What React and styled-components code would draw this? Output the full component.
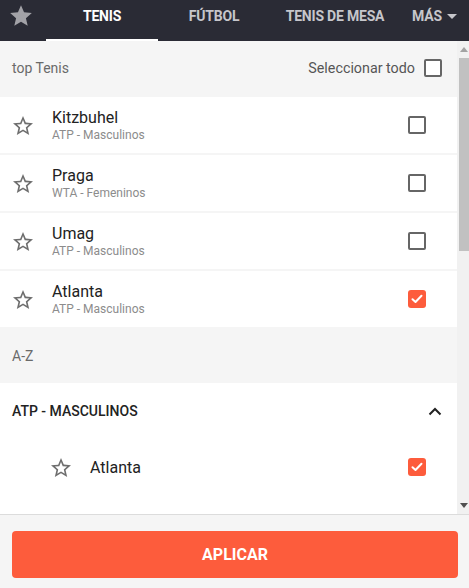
import React, { useState } from 'react'
import styled, { createGlobalStyle } from 'styled-components'

const GlobalStyle = createGlobalStyle`
  html, body {
    margin: 0;
    padding: 0;
    font-family: Roboto, "Liberation Sans", Arial, sans-serif;
    background: #fff;
  }
  * { box-sizing: border-box; }
`

const ACCENT = '#fd5c3c'

const topEvents = [
  { id: 'kitz', name: 'Kitzbuhel', league: 'ATP - Masculinos', checked: false },
  { id: 'praga', name: 'Praga', league: 'WTA - Femeninos', checked: false },
  { id: 'umag', name: 'Umag', league: 'ATP - Masculinos', checked: false },
  { id: 'atl', name: 'Atlanta', league: 'ATP - Masculinos', checked: true },
]

// only the part of the A-Z list that is in view
const groups = [
  { title: 'ATP - Masculinos', items: [
    { id: 'a1', name: 'Atlanta', checked: true },
  ] },
]

const StarOutline = ({ size = 24 }) => (
  <svg width={size} height={size} viewBox="0 0 24 24" fill="#6e6e6e">
    <path d="M22 9.24l-7.19-.62L12 2 9.19 8.63 2 9.24l5.46 4.73L5.82 21 12 17.27 18.18 21l-1.63-7.03L22 9.24zM12 15.4l-3.76 2.27 1-4.28-3.32-2.88 4.38-.38L12 6.1l1.71 4.04 4.38.38-3.32 2.88 1 4.28L12 15.4z" />
  </svg>
)

const Check = ({ checked, onClick }) => (
  <CheckBox $checked={checked} onClick={onClick}>
    {checked && (
      <svg width="12" height="10" viewBox="0 0 12 10">
        <path d="M1.5 5.2l3 2.8 6-6.2" fill="none" stroke="#fff" strokeWidth="2" strokeLinecap="round" strokeLinejoin="round" />
      </svg>
    )}
  </CheckBox>
)

export default function App() {
  const [top, setTop] = useState(topEvents)
  const [tab, setTab] = useState('tenis')

  const toggleTop = (id) => setTop((s) => s.map((e) => e.id === id ? { ...e, checked: !e.checked } : e))

  return (
    <Page>
      <GlobalStyle />
      <TopBar>
        <FavTab>
          <svg width="26" height="26" viewBox="0 0 24 24" fill="#a2a2a7">
            <path d="M12 17.27L18.18 21l-1.64-7.03L22 9.24l-7.19-.61L12 2 9.19 8.63 2 9.24l5.46 4.73L5.82 21z" />
          </svg>
        </FavTab>
        <Tab $w={112} $active={tab === 'tenis'} onClick={() => setTab('tenis')}>Tenis</Tab>
        <Tab $w={112} $active={tab === 'futbol'} onClick={() => setTab('futbol')}>Fútbol</Tab>
        <Tab $w={130} $active={tab === 'mesa'} onClick={() => setTab('mesa')}>Tenis de mesa</Tab>
        <Tab $grow>
          Más
          <Caret />
        </Tab>
      </TopBar>

      <ScrollArea>
        <List>
          <SectionHead>
            <span>top Tenis</span>
            <SelectAll>
              Seleccionar todo
              <Check checked={false} />
            </SelectAll>
          </SectionHead>

          {top.map((e) => (
            <EventRow key={e.id}>
              <StarSlot><StarOutline /></StarSlot>
              <EventText>
                <EventName>{e.name}</EventName>
                <EventLeague>{e.league}</EventLeague>
              </EventText>
              <Check checked={e.checked} onClick={() => toggleTop(e.id)} />
            </EventRow>
          ))}

          <SectionHead>
            <span>A-Z</span>
          </SectionHead>

          {groups.map((g) => (
            <Group key={g.title}>
              <GroupHead>
                <span>{g.title}</span>
                <svg width="14" height="9" viewBox="0 0 14 9">
                  <path d="M1.5 7.5L7 2l5.5 5.5" fill="none" stroke="#222" strokeWidth="2" />
                </svg>
              </GroupHead>
              {g.items.map((it) => (
                <SubRow key={it.id}>
                  <StarSlot $indent><StarOutline /></StarSlot>
                  <SubName>{it.name}</SubName>
                  <Check checked={it.checked} />
                </SubRow>
              ))}
            </Group>
          ))}
        </List>

        <ScrollBar>
          <ScrollBtn>
            <svg width="8" height="5" viewBox="0 0 8 5"><path d="M0 5L4 0L8 5Z" fill="#a3a3a3" /></svg>
          </ScrollBtn>
          <Thumb />
          <ScrollBtn>
            <svg width="8" height="5" viewBox="0 0 8 5"><path d="M0 0L4 5L8 0Z" fill="#505050" /></svg>
          </ScrollBtn>
        </ScrollBar>
      </ScrollArea>

      <Footer>
        <ApplyButton>Aplicar</ApplyButton>
      </Footer>
    </Page>
  )
}

const Page = styled.div`
  width: 469px;
  height: 588px;
  display: flex;
  flex-direction: column;
  overflow: hidden;
  background: #f5f5f5;
`

const TopBar = styled.nav`
  height: 41px;
  flex: none;
  display: flex;
  background: #2a2b35;
`

const FavTab = styled.div`
  width: 46px;
  padding: 3px 0 0 8px;
`

const Tab = styled.div`
  width: ${(p) => (p.$w ? `${p.$w}px` : 'auto')};
  flex: ${(p) => (p.$grow ? '1' : 'none')};
  height: 41px;
  padding-top: 7px;
  display: flex;
  justify-content: center;
  gap: 5px;
  line-height: 18px;
  font-size: 14px;
  font-weight: 700;
  text-transform: uppercase;
  letter-spacing: -0.2px;
  color: ${(p) => (p.$active ? '#fff' : '#c6c6cb')};
  border-bottom: 2px solid ${(p) => (p.$active ? '#fff' : 'transparent')};
  cursor: pointer;
`

const Caret = styled.span`
  margin-top: 7px;
  width: 0;
  height: 0;
  border-left: 5px solid transparent;
  border-right: 5px solid transparent;
  border-top: 5px solid #c6c6cb;
`

const ScrollArea = styled.div`
  height: 473px;
  flex: none;
  display: flex;
  background: #f5f5f5;
`

const List = styled.div`
  flex: 1;
  min-width: 0;
  overflow: hidden;
  display: flex;
  flex-direction: column;
  gap: 2px;
`

const ScrollBar = styled.div`
  width: 12px;
  flex: none;
  display: flex;
  flex-direction: column;
  justify-content: space-between;
  background: #f1f1f1;
`

const ScrollBtn = styled.div`
  height: 17px;
  display: flex;
  align-items: center;
  justify-content: center;
  padding-left: 1px;
`

const Thumb = styled.div`
  height: 193px;
  margin: 0 0 auto 2px;
  background: #c1c1c1;
`

const SectionHead = styled.div`
  flex: none;
  height: 54px;
  padding: 0 15px 0 12px;
  display: flex;
  align-items: center;
  justify-content: space-between;
  font-size: 14px;
  color: #6a6a6a;
  background: #f5f5f5;
`

const SelectAll = styled.label`
  display: flex;
  align-items: center;
  gap: 9px;
  font-size: 14.3px;
  color: #555;
`

const CheckBox = styled.span`
  flex: none;
  width: 18px;
  height: 18px;
  display: flex;
  align-items: center;
  justify-content: center;
  background: ${(p) => (p.$checked ? ACCENT : '#fff')};
  border: ${(p) => (p.$checked ? 'none' : '2px solid #666')};
  border-radius: ${(p) => (p.$checked ? '3px' : '2px')};
  cursor: pointer;
`

const EventRow = styled.div`
  flex: none;
  height: 56px;
  padding: 0 31px 0 11px;
  display: flex;
  align-items: center;
  background: #fff;
`

const StarSlot = styled.span`
  display: flex;
  margin-left: ${(p) => (p.$indent ? '38px' : '0')};
  width: 41px;
  margin-top: 1px;
`

const EventText = styled.div`
  flex: 1;
  display: flex;
  flex-direction: column;
`

const EventName = styled.span`
  font-size: 16px;
  line-height: 19px;
  color: #222;
`

const EventLeague = styled.span`
  margin-top: 1px;
  font-size: 12px;
  line-height: 15px;
  color: #8c8c8c;
`

const Group = styled.section`
  flex: none;
  background: #fff;
  margin-top: -2px;
  padding-bottom: 20px;
`

const GroupHead = styled.div`
  height: 56px;
  padding: 0 15px 0 12px;
  display: flex;
  align-items: center;
  justify-content: space-between;
  font-size: 14px;
  font-weight: 500;
  text-transform: uppercase;
  color: #222;
`

const SubRow = styled.div`
  height: 56px;
  padding: 0 31px 0 11px;
  display: flex;
  align-items: center;
`

const SubName = styled.span`
  flex: 1;
  font-size: 16px;
  color: #222;
`

const Footer = styled.footer`
  flex: 1;
  border-top: 1px solid #dcdcdc;
  background: #f5f5f5;
  padding: 16px 11px 0 12px;
`

const ApplyButton = styled.button`
  width: 100%;
  height: 47px;
  border: none;
  border-radius: 4px;
  background: ${ACCENT};
  color: #fff;
  font-family: Roboto, "Liberation Sans", Arial, sans-serif;
  font-size: 16px;
  font-weight: 700;
  text-transform: uppercase;
  cursor: pointer;
`
